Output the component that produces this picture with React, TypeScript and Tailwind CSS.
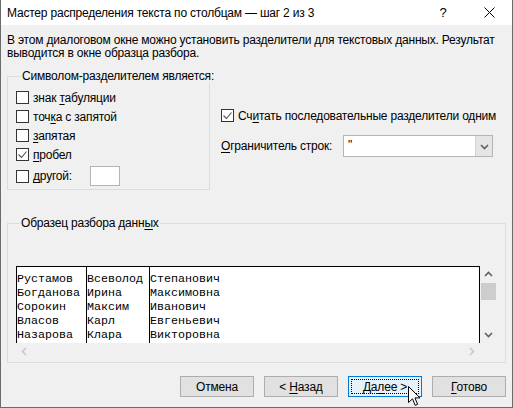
import type { ReactNode } from 'react';

const PREVIEW_ROWS = [
  ['Рустамов', 'Всеволод', 'Степанович'],
  ['Богданова', 'Ирина', 'Максимовна'],
  ['Сорокин', 'Максим', 'Иванович'],
  ['Власов', 'Карл', 'Евгеньевич'],
  ['Назарова', 'Клара', 'Викторовна'],
];

// label with a keyboard-accelerator letter
function Mn({ pre = '', u, post = '' }: { pre?: string; u: string; post?: string }) {
  return (
    <span className="whitespace-nowrap">
      {pre}
      <span className="underline decoration-1 underline-offset-[2px]">{u}</span>
      {post}
    </span>
  );
}

function CheckBox({ checked }: { checked?: boolean }) {
  return (
    <span className="flex h-[13px] w-[13px] shrink-0 items-center justify-center border border-[#333333] bg-white">
      {checked && (
        <svg width="11" height="11" viewBox="0 0 11 11">
          <path d="M1.5 5.5 L4.5 8.5 L9.5 2.5" fill="none" stroke="#505050" strokeWidth="1.1" />
        </svg>
      )}
    </span>
  );
}

function Option({ checked, children }: { checked?: boolean; children: ReactNode }) {
  return (
    <div className="flex h-[19px] items-center gap-[4px]">
      <CheckBox checked={checked} />
      {children}
    </div>
  );
}

function Chevron({ dir, color }: { dir: 'up' | 'down' | 'left' | 'right'; color: string }) {
  const d = {
    up: 'M1 6 L4.5 2.5 L8 6',
    down: 'M1 3 L4.5 6.5 L8 3',
    left: 'M6 1 L2.5 4.5 L6 8',
    right: 'M3 1 L6.5 4.5 L3 8',
  }[dir];
  return (
    <svg width="9" height="9" viewBox="0 0 9 9">
      <path d={d} fill="none" stroke={color} strokeWidth="1.6" />
    </svg>
  );
}

function DialogButton({ children, focused }: { children: ReactNode; focused?: boolean }) {
  return (
    <button
      type="button"
      className={
        focused
          ? 'relative flex h-[21px] w-[74px] items-center justify-center border border-[#0078d7] bg-[#e5f1fb]'
          : 'relative flex h-[21px] w-[74px] items-center justify-center border border-[#adadad] bg-[#e1e1e1]'
      }
    >
      {focused && <span className="absolute inset-[2px] border border-dotted border-black" />}
      {children}
    </button>
  );
}

export default function App() {
  return (
    <div className="relative flex h-[408px] w-[513px] flex-col border-x border-b border-[#6b6b6b] bg-[#f0f0f0] font-['Liberation_Sans',Arial,sans-serif] text-[12px] leading-[14px] tracking-[-0.2px] text-black">
      <div className="flex h-[25px] shrink-0 items-center bg-white pl-[6px]">
        <span className="flex-1 whitespace-nowrap">Мастер распределения текста по столбцам — шаг 2 из 3</span>
        <span className="flex w-[46px] justify-center text-[13px]">?</span>
        <span className="flex w-[46px] justify-center">
          <svg width="11" height="11" viewBox="0 0 11 11">
            <path d="M0.5 0.5 L10.5 10.5 M10.5 0.5 L0.5 10.5" stroke="#000" strokeWidth="1" />
          </svg>
        </span>
      </div>

      <p className="px-[6px] pt-[9px] leading-[13px]">
        <span className="whitespace-nowrap">
          В этом диалоговом окне можно установить разделители для текстовых данных. Результат
        </span>
        <br />
        <span className="whitespace-nowrap">выводится в окне образца разбора.</span>
      </p>

      <div className="mt-[9px] flex items-start px-[6px]">
        <fieldset className="w-[203px] min-w-0 border border-[#dcdcdc] pb-[2px] pl-[8px] pt-[5px]">
          <legend className="ml-[5px] px-[1px] whitespace-nowrap">Символом-разделителем является:</legend>
          <Option>
            <Mn pre="знак " u="т" post="абуляции" />
          </Option>
          <Option>
            <Mn pre="точ" u="к" post="а с запятой" />
          </Option>
          <Option>
            <Mn u="з" post="апятая" />
          </Option>
          <Option checked>
            <Mn u="п" post="робел" />
          </Option>
          <div className="mt-[1px] flex h-[22px] items-center gap-[4px]">
            <CheckBox />
            <span className="w-[53px]">
              <Mn u="д" post="ругой:" />
            </span>
            <span className="h-[20px] w-[30px] border border-[#b4b4b4] bg-white" />
          </div>
        </fieldset>

        <div className="ml-[11px] flex flex-col">
          <div className="mt-[40px] flex h-[13px] items-center gap-[4px]">
            <CheckBox checked />
            <Mn pre="Сч" u="и" post="тать последовательные разделители одним" />
          </div>
          <div className="mt-[13px] flex items-center">
            <span className="w-[122px]">
              <Mn u="О" post="граничитель строк:" />
            </span>
            <div className="flex h-[22px] w-[150px] border border-[#b4b4b4] bg-white">
              <span className="flex-1 pl-[4px] pt-[2px]">"</span>
              <span className="flex w-[17px] items-center justify-center border-l border-[#d0d0d0] bg-[#e5e5e5]">
                <Chevron dir="down" color="#606060" />
              </span>
            </div>
          </div>
        </div>
      </div>

      <fieldset className="mx-[6px] mt-[26px] min-w-0 border border-[#dcdcdc] pb-[2px] pl-[8px] pt-[36px]">
        <legend className="ml-[4px] px-[1px] whitespace-nowrap">
          <Mn pre="Образец разбора данн" u="ы" post="х" />
        </legend>
        <div className="flex h-[77px]">
          <div className="flex w-[464px] border-x border-t border-black bg-white font-['Liberation_Mono',monospace] text-[11.67px] leading-[14px] tracking-normal">
            <div className="w-[70px] border-r border-black pt-[5px]">
              {PREVIEW_ROWS.map((r) => (
                <div key={r[0]} className="whitespace-nowrap">{r[0]}</div>
              ))}
            </div>
            <div className="w-[63px] border-r border-black pt-[5px]">
              {PREVIEW_ROWS.map((r) => (
                <div key={r[0]} className="whitespace-nowrap">{r[1]}</div>
              ))}
            </div>
            <div className="flex-1 pt-[5px]">
              {PREVIEW_ROWS.map((r) => (
                <div key={r[0]} className="whitespace-nowrap">{r[2]}</div>
              ))}
            </div>
          </div>
          <div className="flex w-[17px] flex-col items-center">
            <span className="flex h-[17px] w-full items-center justify-center">
              <Chevron dir="up" color="#606060" />
            </span>
            <span className="h-[17px] w-[15px] bg-[#cdcdcd]" />
            <span className="flex-1" />
            <span className="flex h-[17px] w-full items-center justify-center">
              <Chevron dir="down" color="#606060" />
            </span>
          </div>
        </div>
        <div className="flex h-[17px] w-[464px] items-center justify-between px-[4px]">
          <Chevron dir="left" color="#c8c8c8" />
          <Chevron dir="right" color="#c8c8c8" />
        </div>
      </fieldset>

      <div className="mt-[13px] flex justify-end gap-[10px] pr-[6px]">
        <DialogButton>Отмена</DialogButton>
        <DialogButton>
          <span className="whitespace-pre">{'< '}</span>
          <Mn u="Н" post="азад" />
        </DialogButton>
        <DialogButton focused>
          <Mn pre="Да" u="л" post="ее >" />
        </DialogButton>
        <DialogButton>
          <Mn u="Г" post="отово" />
        </DialogButton>
      </div>

      {/* mouse pointer resting on the focused button */}
      <svg className="absolute left-[407px] top-[386px]" width="13" height="21" viewBox="0 0 13 21">
        <path
          d="M0.5 0.5 L0.5 16.5 L4.5 12.8 L7.2 19.3 L9.6 18.3 L6.9 11.9 L12 11.9 Z"
          fill="#fff"
          stroke="#000"
          strokeWidth="1"
          strokeLinejoin="round"
        />
      </svg>
    </div>
  );
}
